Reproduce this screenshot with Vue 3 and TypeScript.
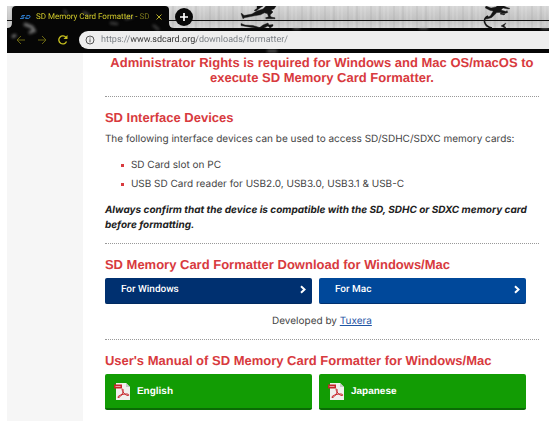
<script setup lang="ts">
import { ref } from 'vue'

const address = ref('https://www.sdcard.org/downloads/formatter/')
const devices: string[] = ['SD Card slot on PC', 'USB SD Card reader for USB2.0, USB3.0, USB3.1 & USB-C']
const downloads = [
  { label: 'For Windows', kind: 'windows' },
  { label: 'For Mac', kind: 'mac' },
]
const manuals: string[] = ['English', 'Japanese']
</script>

<template>
  <div class="window">
    <header class="chrome">
      <svg class="theme" viewBox="0 0 542 47" preserveAspectRatio="xMinYMin slice" aria-hidden="true">
        <defs>
          <linearGradient id="metal" x1="0" y1="0" x2="0" y2="1">
            <stop offset="0" stop-color="#d6d6d6" />
            <stop offset="0.6" stop-color="#c2c2c2" />
            <stop offset="1" stop-color="#d4d4d4" />
          </linearGradient>
          <pattern id="grain" width="23" height="24" patternUnits="userSpaceOnUse">
            <path d="M2 0v24M9 0v24M13 0v24" stroke="#fff" stroke-opacity=".2" />
            <path d="M5 0v24M19 0v24" stroke="#777" stroke-opacity=".1" stroke-width="2" />
          </pattern>
          <filter id="soft" x="-30%" y="-30%" width="160%" height="160%"><feGaussianBlur stdDeviation="1.4" /></filter>
        </defs>
        <rect width="1600" height="47" fill="#060606" />
        <rect width="1600" height="22" fill="url(#metal)" />
        <rect width="1600" height="22" fill="url(#grain)" />
        <path d="M0 14.5H1600" stroke="#111" />
        <g fill="#151515" stroke="#151515" stroke-width=".4" stroke-linejoin="round">
          <path d="M234 7.500l1 0 2 2 8-1.500 5-3 6-2 3-3h10l-2 3-3 1 2 2-3 3 1 2 4 .8v1h-9l-.5-1 3-1-1-3-3-1-4 2-6 1-10 2-1.500 1z" />
          <path d="M250 0h6l-3 2-4 3-2-.5 3-2z" />
          <path d="M234 17.500l4 1.500 8 .5 5 1.500 3 1h-6l-9-1.500-5-1z" />
          <path d="M252 22l4-3 5-2 1 2 4-.5v1.500l-3 2-2-2-4 2z" />
          <path d="M479 0l5 2 5-1 1-1h7l2 1 4 1.500-2 .5-5-1-2 2 5 1.500 1-1 .8 2-3 1-5-1-3 0-5 5-5 1.500-1.500-1 5-2 3-5-3-.5-5-2.500z" />
          <path d="M494 7l4 1-1 1-4-1zM499 17l-5 3 4 2 1-.5-2-1.500z" />
        </g>
        <path d="M481 10Q477 12 477.500 16Q479 21 485 22" fill="none" stroke="#151515" stroke-width="1.600" />
        <path d="M0 22Q5 22 5 17V4Q5 0 9 0H158Q162 0 162 4V17Q162 22 167 22V25H0Z" fill="#060606" />
        <g fill="none" stroke="#aaa" filter="url(#soft)">
          <path d="M17 18l8 3 3 5M22 27l6-3M9 29l-4 2" stroke-width="3" opacity=".7" />
          <path d="M57 4l3 4M76 6l6 3M103 17l8 1M118 13l8-2M146 19l6 5" stroke-width="2" opacity=".45" />
          <path d="M286 22h7M412 22h9M534 22h8M260 45h10" stroke-width="2" opacity=".6" />
        </g>
      </svg>

      <div class="tabs">
        <div class="tab">
          <svg class="favicon" viewBox="0 0 11 6" aria-hidden="true">
            <path d="M5 1.500H2L1.500 3H4L3.500 4.500H0M6.500 1.500H9Q10.500 1.500 10 3Q9.500 4.500 8 4.500H5.500L6 3H7.500" fill="none" stroke="#2b76c4" />
          </svg>
          <span class="title">SD Memory Card Formatter - <span class="fade">SD</span></span>
          <button class="close" type="button" aria-label="Close tab">
            <svg viewBox="0 0 6 6"><path d="M.5.5l5 5M5.500.5l-5 5" stroke="#b5ad2c" fill="none" /></svg>
          </button>
        </div>
        <button class="new-tab" type="button" aria-label="New tab">
          <svg viewBox="0 0 18 18"><path d="M9 5v8M5 9h8" stroke="#fff" stroke-width="1.700" fill="none" /></svg>
        </button>
      </div>

      <div class="toolbar">
        <button class="nav" type="button" aria-label="Back">
          <svg viewBox="0 0 10 10"><path d="M9 5H1.500M5 1L1 5l4 4" stroke="#686411" fill="none" /></svg>
        </button>
        <button class="nav" type="button" aria-label="Forward">
          <svg viewBox="0 0 10 10"><path d="M1 5h7.500M5 1l4 4-4 4" stroke="#686411" fill="none" /></svg>
        </button>
        <button class="nav" type="button" aria-label="Reload">
          <svg viewBox="0 0 10 10">
            <path d="M8.500 6.500A4 4 0 1 1 8 2.500" stroke="#c9c21f" stroke-width="1.300" fill="none" />
            <path d="M9.500 0v4h-4z" fill="#c9c21f" />
          </svg>
        </button>
        <label class="address">
          <svg class="info" viewBox="0 0 10 10" aria-hidden="true">
            <circle cx="5" cy="5" r="4" fill="none" stroke="#555" />
            <path d="M5 4.300v3M5 2.500v1" stroke="#555" />
          </svg>
          <input v-model="address" type="text" aria-label="Address" spellcheck="false" />
        </label>
      </div>
    </header>

    <div class="page">
      <aside class="side"></aside>
      <main class="content">
        <p class="notice">Administrator Rights is required for Windows and Mac OS/macOS to execute SD Memory Card Formatter.</p>

        <section class="devices">
          <h2>SD Interface Devices</h2>
          <p>The following interface devices can be used to access SD/SDHC/SDXC memory cards:</p>
          <ul>
            <li v-for="device in devices" :key="device">{{ device }}</li>
          </ul>
          <p class="confirm">Always confirm that the device is compatible with the SD, SDHC or SDXC memory card before formatting.</p>
        </section>

        <section class="downloads">
          <h2>SD Memory Card Formatter Download for Windows/Mac</h2>
          <div class="pair">
            <a v-for="item in downloads" :key="item.kind" href="#" class="download" :class="item.kind">
              <span>{{ item.label }}</span>
              <svg class="chevron" viewBox="0 0 6 8" aria-hidden="true"><path d="M1 .8L4.500 4 1 7.200" fill="none" stroke="#fff" stroke-width="2" /></svg>
            </a>
          </div>
          <p class="developer">Developed by <a href="#">Tuxera</a></p>
        </section>

        <section class="manuals">
          <h2>User's Manual of SD Memory Card Formatter for Windows/Mac</h2>
          <div class="pair">
            <a v-for="language in manuals" :key="language" href="#" class="manual">
              <svg class="pdf" viewBox="0 0 17 17" aria-hidden="true">
                <path d="M2 0h10l4 4v13H2z" fill="#f1f0ee" />
                <path d="M12 0v4h4z" fill="#c9c9c9" />
                <rect y="1.500" width="8" height="4" fill="#c7252b" />
                <path d="M1.500 3.500h5" stroke="#e9a0a0" />
                <path d="M8.500 6c1.200 0 .6 3-.2 4.800S5 15 4 14.500s1.500-2.500 5-3.200 6-.3 5.800.8-3.300.2-5-2.100S7.700 6 8.500 6z" fill="none" stroke="#c7252b" />
              </svg>
              <span>{{ language }}</span>
            </a>
          </div>
        </section>
      </main>
    </div>
  </div>
</template>

<style>
body {
  margin: 0;
  background: #fff;
}
</style>

<style scoped>
* {
  box-sizing: border-box;
}
.window {
  display: flex;
  flex-direction: column;
  min-height: 100vh;
  padding: 6px 1px 0 7px;
  font-family: Inter, Arial, sans-serif;
  font-size: 10px;
  line-height: 15px;
  color: #444;
  text-rendering: geometricPrecision;
}
h2,
p,
ul {
  margin: 0;
  padding: 0;
}
button {
  padding: 0;
  border: 0;
  background: none;
}
svg {
  display: block;
}
.chrome {
  position: relative;
  height: 47px;
  overflow: hidden;
  font-family: Roboto, sans-serif;
}
.theme {
  position: absolute;
  inset: 0;
  width: 100%;
  height: 100%;
}
.tabs,
.toolbar {
  position: relative;
  display: flex;
  align-items: center;
}
.tabs {
  height: 22px;
  padding-left: 13px;
  gap: 13px;
}
.tab {
  display: flex;
  align-items: center;
  width: 142px;
}
.favicon {
  width: 11px;
  height: 6px;
}
.title {
  flex: 1;
  margin-left: 5px;
  font-size: 8px;
  line-height: 12px;
  color: #d0c92a;
  white-space: nowrap;
}
.fade {
  color: #77731c;
}
.close svg {
  width: 6px;
  height: 6px;
}
.new-tab {
  border-radius: 50%;
  background: #080808;
}
.new-tab svg {
  width: 18px;
  height: 18px;
}
.toolbar {
  height: 23px;
  padding-left: 9px;
  gap: 11px;
}
.nav svg {
  width: 10px;
  height: 10px;
}
.address {
  display: flex;
  flex: 1;
  align-items: center;
  gap: 6px;
  height: 18px;
  padding-left: 6px;
  border-radius: 9px 0 0 9px;
  background: #eee;
}
.info {
  width: 10px;
  height: 10px;
}
input {
  flex: 1;
  min-width: 0;
  padding: 0;
  border: 0;
  outline: 0;
  font: 9px/16px Roboto, "Open Sans", sans-serif;
  color: transparent;
  background: linear-gradient(90deg, #757a80 30px, #333 30px, #333 96px, #757a80 96px);
  background-clip: text;
  text-rendering: geometricPrecision;
}
.page {
  display: flex;
  flex: 1;
}
.side {
  width: 14%;
  background: #f6f6f6;
}
.content {
  flex: 1;
  padding: 2px 10px 12px 22px;
}
.notice,
h2 {
  font-family: "Liberation Sans", Arial, sans-serif;
  font-size: 13px;
  font-weight: bold;
  line-height: 15px;
  color: #d83a3e;
}
.notice {
  padding-bottom: 11px;
  text-align: center;
}
section {
  padding-top: 13px;
  border-top: 1px dotted #999;
}
.devices h2 {
  margin-bottom: 7px;
}
ul {
  margin: 9px 0;
  padding-left: 26px;
  line-height: 19px;
  list-style: none;
}
li {
  position: relative;
}
li::before {
  content: "";
  position: absolute;
  top: 8px;
  left: -10px;
  width: 3px;
  height: 3px;
  background: #d83a3e;
}
.confirm {
  padding-bottom: 10px;
  font-weight: 700;
  font-style: italic;
  color: #222;
}
.pair {
  display: grid;
  grid-template-columns: 1fr 1fr;
  gap: 7px;
  margin-top: 6px;
  padding-right: 13px;
}
.download,
.manual {
  display: flex;
  align-items: center;
  border-radius: 2px;
  color: #fff;
  text-decoration: none;
}
.download {
  justify-content: space-between;
  height: 26px;
  padding: 0 6px 2px 16px;
  border-bottom: 1px solid #002a60;
  font-family: Roboto, sans-serif;
  font-weight: 500;
}
.windows {
  background: #003070;
}
.mac {
  border-color: #00306f;
  background: #00489a;
}
.chevron {
  width: 6px;
  height: 9px;
}
.developer {
  padding: 10px 0;
  text-align: center;
}
.developer a {
  color: #1f55a5;
}
.manual {
  height: 36px;
  gap: 6px;
  padding-left: 9px;
  border-bottom: 2px solid #0a6b05;
  background: #129c04;
  font-family: "Liberation Sans", Arial, sans-serif;
  font-weight: bold;
}
.pdf {
  width: 17px;
  height: 17px;
}
</style>
